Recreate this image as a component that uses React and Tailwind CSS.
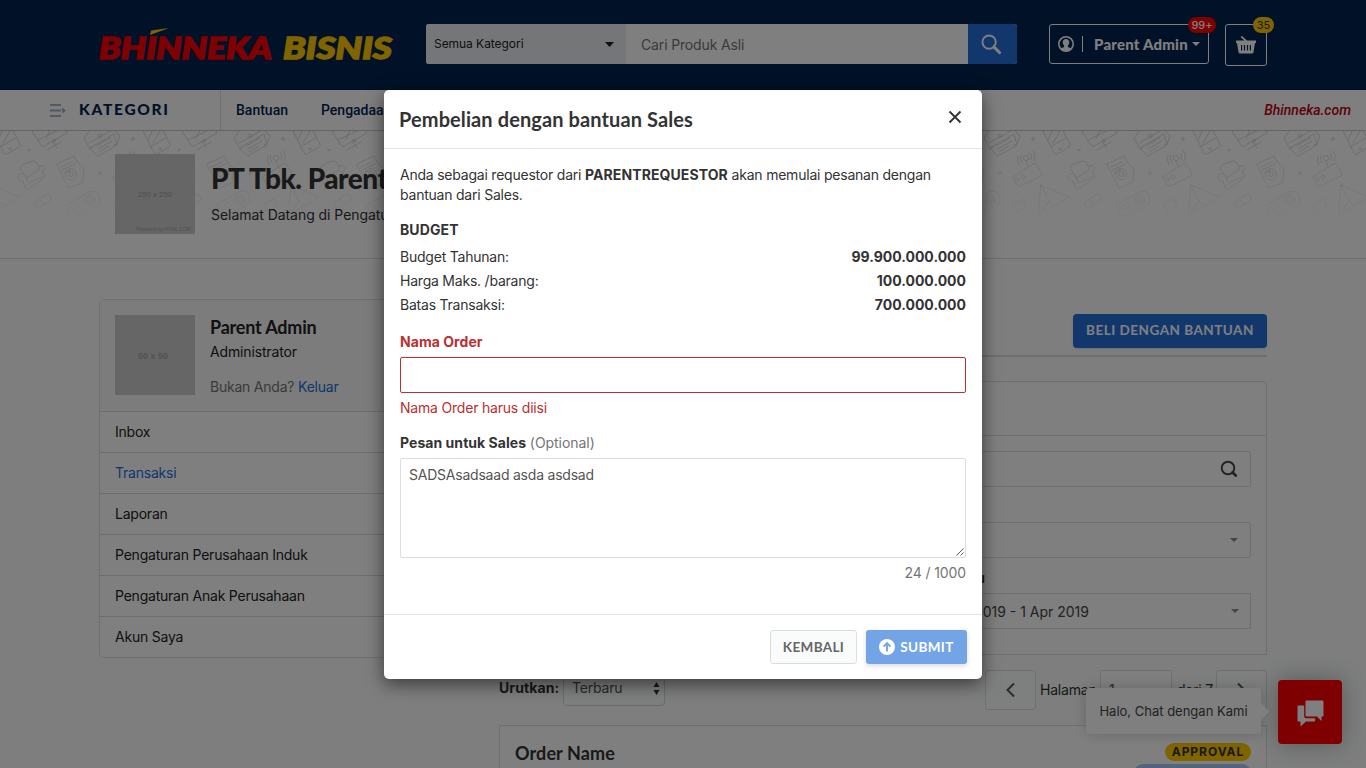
import React from "react";

const menu = ["Inbox", "Transaksi", "Laporan", "Pengaturan Perusahaan Induk", "Pengaturan Anak Perusahaan", "Akun Saya"];
const budget = [
  ["Budget Tahunan:", "99.900.000.000"],
  ["Harga Maks. /barang:", "100.000.000"],
  ["Batas Transaksi:", "700.000.000"],
];

function Caret({ className }) {
  return (
    <svg className={className} viewBox="0 0 10 5" preserveAspectRatio="none" fill="currentColor">
      <path d="M0 0h10L5 5z" />
    </svg>
  );
}

function Logo() {
  return (
    <svg width="298" height="40" viewBox="0 0 298 40" className="block">
      <g fontFamily="Lato, sans-serif" fontWeight="900" fontStyle="italic" fontSize="29.5" strokeWidth="1.5">
        <text x="0" y="34" fill="#fe0000" stroke="#fe0000" textLength="173" lengthAdjust="spacingAndGlyphs">BHINNEKA</text>
        <text x="184" y="34" fill="#ffc800" stroke="#ffc800" textLength="109" lengthAdjust="spacingAndGlyphs">BISNIS</text>
      </g>
      <path d="M52 5.500 70 3 51 10z" fill="#ffc800" />
    </svg>
  );
}

function Washer() {
  return (
    <g>
      <path d="M124 33l17-8 4 7 6 6-1 9-1 5-13 5z M128 36l11-5 M129 39l13-6 M131 42l7-3" />
      <circle cx="138" cy="43" r="5.5" />
      <circle cx="138" cy="43" r="2.5" />
    </g>
  );
}

function Projector() {
  return (
    <g>
      <path d="M-16 74l22-13q7-3 10 3l1 4q1 4-3 6l-22 11q-4 2-6-2z M-13 77l9-5 M-12 80l9-5" />
      <circle cx="7" cy="69" r="5" />
      <circle cx="7" cy="69" r="2.5" />
    </g>
  );
}

function HeroPattern() {
  return (
    <svg className="absolute inset-0 h-full w-full">
      <defs>
        <linearGradient id="fade" x1="0" y1="0" x2="0" y2="1">
          <stop offset="0" stopColor="#fff" stopOpacity="1" />
          <stop offset="0.45" stopColor="#fff" stopOpacity="0.5" />
          <stop offset="0.7" stopColor="#fff" stopOpacity="0.15" />
        </linearGradient>
        <mask id="fadeMask">
          <rect width="1366" height="127" fill="url(#fade)" />
        </mask>
        <pattern id="tile" x="-67" y="0" width="150" height="127" patternUnits="userSpaceOnUse">
          <g fill="none" stroke="#d2d2d2" strokeWidth="0.9" strokeLinejoin="round" strokeLinecap="round">
            <path d="M7-1 1 7l6 11 3-2 M30-2l7 7-3 8-3 1 M7 17l3-2 21-12 3 11-19 11z M6 12 31-2 M13 15l14-8 M15 18l14-8 M16 21l10-6" />
            <circle cx="17" cy="5" r="2" />
            <path d="M50 6v4 M48 8h4 M17 40v4 M15 42h4" />
            <path d="M59-2 71 22q1 2 3 1l12-7q2-1 1-3L79-2 M67 16l16-9 M65 9 70-2 M70 12 77 0" />
            <circle cx="77" cy="18" r="1" />
            <circle cx="96" cy="19" r="1" />
            <path d="M99 0l9 14q1 2 3 1l23-13-2-4 M105 9l25-12 M113 8l4-9 M120 12l4 5 M114 19l14-8" />
            <circle cx="121" cy="10" r="1.5" />
            <path d="M30 46l20-13q2-1 3 0l6 9q0 2-1 3L37 55q-2 0-3-1z M45 36l-2-6" />
            <circle cx="34.500" cy="48.500" r="1.800" />
            <circle cx="40" cy="45.500" r="1.800" />
            <circle cx="43" cy="27" r="2.700" />
            <path d="M38 24q-2 4 1 8 M35 25q-2 4 1 9 M47 22q3 3 1 7 M50 20q4 4 1 10" />
            <path d="M88 40q-2-5 3-7l9-3q4 0 5 5q5-2 7 2q0 3-3 3l3 6-15 11q-4 2-5-1l-2-6q-4 1-5-3q0-5 5-4q3 1 3 4l13-8q-1-3 2-4 M93 47l3 5 13-6 M92 45l-3-5" />
            <Washer />
            <g transform="translate(-150 0)"><Washer /></g>
            <Projector />
            <g transform="translate(150 0)"><Projector /></g>
            <path d="M31 73l10-5 3 7-9 6-2-1z M58 54l28 12-30 18z M58 54l8 16-9 13 M66 70l-6 9 M66 70l4 4" />
            <path d="M102 71l12-8q3 0 4 4l-1 3-12 7q-3 0-3-6z M107 68l3 5" />
          </g>
        </pattern>
      </defs>
      <rect width="1366" height="127" fill="url(#tile)" mask="url(#fadeMask)" />
    </svg>
  );
}

function Header() {
  return (
    <header className="flex h-[90px] items-start bg-[#02224e] pl-[99px]">
      <div className="mt-[25px] w-[327px]"><Logo /></div>
      <div className="mt-6 flex h-10 w-[591px] overflow-hidden rounded-[3px] bg-white">
        <div className="flex w-[200px] items-center justify-between bg-[#ebedf0] pr-3 pl-2 text-xs tracking-[-0.05px] text-[#222]">
          <span>Semua Kategori</span>
          <Caret className="h-[5px] w-[9px]" />
        </div>
        <div className="flex flex-1 items-center pt-0.5 pl-[15px] text-sm tracking-[-0.15px] text-[#757575]">Cari Produk Asli</div>
        <div className="flex w-[49px] items-center justify-center bg-[#226fd8] text-white">
          <svg className="mr-0.5" width="21" height="21" viewBox="0 0 22 22" fill="none" stroke="currentColor">
            <circle cx="8.500" cy="8.500" r="7" strokeWidth="2" />
            <path d="M13.500 13.500 19.500 19.500" strokeWidth="3" strokeLinecap="round" />
          </svg>
        </div>
      </div>
      <div className="relative mt-6 ml-8 flex h-10 w-40 items-center rounded-[3px] border border-white pl-2 text-white">
        <svg width="16" height="16" viewBox="0 0 16 16">
          <circle cx="8" cy="8" r="7.200" fill="none" stroke="currentColor" strokeWidth="1.600" />
          <path d="M8 3c-2 0-3.300 1.500-3.300 3.300 0 1.400.6 2.400 1.400 3.200v1.400L2.600 12.400a7 7 0 0 0 10.800 0L9.900 10.900V9.500c.8-.8 1.400-1.800 1.400-3.200C11.300 4.500 10 3 8 3z" fill="currentColor" />
        </svg>
        <span className="ml-2 h-4 w-px bg-white" />
        <span className="ml-[11px] w-[98px] font-['Lato',sans-serif] text-[15px] font-black tracking-[0.2px]">Parent Admin</span>
        <Caret className="h-1 w-2" />
        <span className="absolute -top-2 left-[138px] flex h-4 w-7 items-center justify-center rounded-full bg-[#fe0000] text-[11px] font-medium">99+</span>
      </div>
      <div className="relative mt-6 ml-4 flex h-[42px] w-[42px] items-center justify-center rounded-[3px] border border-white text-white">
        <svg width="20" height="18" viewBox="0 0 20 18" fill="currentColor">
          <path fillRule="evenodd" d="M4.500 1 6 0l5 4.500h9V7h-1l-1.500 9q-.2 1.500-1.500 1.500H4Q2.700 17.500 2.500 16L1 7H0V4.500h8.500z M5 9v5.500h1.200V9z M7.900 9v5.500h1.200V9z M10.900 9v5.500h1.200V9z M13.800 9v5.500H15V9z" />
        </svg>
        <span className="absolute -top-2 left-[27px] flex h-4 w-[21px] items-center justify-center rounded-full bg-[#ffc800] text-[11px] text-[#333]">35</span>
      </div>
    </header>
  );
}

function Nav() {
  return (
    <nav className="flex h-[41px] items-center border-b border-[#c8c8c8] bg-white font-['Roboto',sans-serif] text-sm font-medium text-[#02224e]">
      <div className="flex h-full w-[221px] items-center border-r border-[#dddfe2] pl-[50px]">
        <svg width="16" height="13" viewBox="0 0 16 13" fill="none" stroke="#a4b2c4" strokeWidth="2">
          <path d="M0 1h11 M0 6.500h11 M0 12h11" />
          <path d="M12 3.500 16 6.500 12 9.500z" fill="#a4b2c4" stroke="none" />
        </svg>
        <span className="mb-0.5 ml-[13px] font-['Lato',sans-serif] text-[15.5px] font-black tracking-[1.7px]">KATEGORI</span>
      </div>
      <span className="ml-[15px] w-[85px]">Bantuan</span>
      <span>Pengadaan</span>
      <span className="mr-[15px] ml-auto text-[#c00010] italic">Bhinneka.com</span>
    </nav>
  );
}

function Sidebar() {
  return (
    <aside className="mt-10 h-[359px] w-[370px] rounded border border-[#dde1e1] bg-white">
      <div className="flex h-[111px] bg-[#f8f9f9] pt-[15px] pl-[15px]">
        <div className="flex h-20 w-20 items-center justify-center bg-[#ccc] pt-1 pr-1 font-['Liberation_Sans',sans-serif] text-[9px] font-bold text-[#a4a4a4]">50 x 50</div>
        <div className="ml-[15px] flex flex-col text-sm text-[#222]">
          <span className="font-['Lato',sans-serif] text-lg leading-6 font-bold tracking-[-0.2px]">Parent Admin</span>
          <span className="mt-[3px] leading-5 tracking-[-0.15px]">Administrator</span>
          <span className="mt-[15px] leading-5 tracking-[-0.22px] text-[#757575]">Bukan Anda? <a className="text-[#226fd8]">Keluar</a></span>
        </div>
      </div>
      {menu.map((m) => (
        <div key={m} className={"flex h-[41px] items-center border-t border-[#d8dada] pl-[15px] text-sm tracking-[-0.22px] " + (m === "Transaksi" ? "text-[#226fd8]" : "text-[#222]")}>{m}</div>
      ))}
    </aside>
  );
}

function Main() {
  return (
    <main className="w-[768px] text-sm text-[#333]">
      <div className="flex h-[98px] items-end justify-end border-b-2 border-[#dcdede] pb-[7px]">
        <button className="h-[34px] w-[194px] rounded bg-[#226fd8] font-['Lato',sans-serif] text-[13.5px] font-bold tracking-[0.5px] text-white shadow">BELI DENGAN BANTUAN</button>
      </div>
      <section className="mt-6 h-[274px] rounded-t border border-[#dcdede] bg-white">
        <div className="h-[54px] border-b border-[#dcdede]" />
        <div className="flex flex-col px-[15px]">
          <div className="mt-[15px] flex h-9 items-center justify-end rounded-[2px] border border-[#dcdede] pr-3 text-[#444]">
            <svg width="18" height="18" viewBox="0 0 18 18" fill="none" stroke="currentColor">
              <circle cx="8" cy="8" r="6.300" strokeWidth="1.900" />
              <path d="M12.500 12.500 15.800 15.600" strokeWidth="2.700" strokeLinecap="round" />
            </svg>
          </div>
          <div className="mt-[35px] flex h-9 items-center justify-end rounded-[3px] border border-[#dcdede] pr-3 text-[#888]">
            <Caret className="h-1 w-2" />
          </div>
          <div className="mt-2.5 w-[470px] text-right leading-5 font-semibold">Rentang Waktu</div>
          <div className="mt-[5px] flex h-9 items-center justify-end border border-[#dcdede] pr-[11px] text-[#888]">
            <span className="mt-0.5 mr-[142px] text-[#444]">1 Mar 2019 - 1 Apr 2019</span>
            <Caret className="h-1 w-2" />
          </div>
        </div>
      </section>
      <div className="mt-[15px] flex h-10 items-start">
        <span className="w-16 leading-9 font-bold tracking-[0.1px]">Urutkan:</span>
        <div className="flex h-9 w-[102px] items-center justify-between rounded border border-[#d4d8d8] bg-[#fdfefe] pr-1 pl-2 text-[#555]">
          <span className="tracking-[-0.2px]">Terbaru</span>
          <svg width="7" height="13" viewBox="0 0 7 13" fill="#333"><path d="M3.500 0 6.500 5h-6z M3.500 13 6.500 8h-6z" /></svg>
        </div>
        <div className="ml-auto flex h-10 items-center tracking-[-0.2px]">
          <div className="flex h-10 w-[51px] items-center justify-center rounded-[3px] border border-[#dcdede] bg-[#fdfefe]">
            <svg width="9" height="16" viewBox="0 0 9 16" fill="none" stroke="#555" strokeWidth="1.900"><path d="M8 1.500 1.500 8 8 14.500" /></svg>
          </div>
          <span className="ml-1 w-[60px]">Halaman</span>
          <div className="flex h-10 w-[72px] items-center rounded-[2px] border border-[#dcdede] bg-white pl-2 text-[#555]">1</div>
          <span className="ml-[5px] w-[39px]">dari 7</span>
          <div className="flex h-10 w-[51px] items-center justify-center rounded-[3px] border border-[#dcdede] bg-[#fdfefe]">
            <svg width="9" height="16" viewBox="0 0 9 16" fill="none" stroke="#555" strokeWidth="1.900"><path d="M1 1.500 7.500 8 1 14.500" /></svg>
          </div>
        </div>
      </div>
      <section className="mt-[15px] flex h-20 justify-between border border-[#dcdede] bg-white px-[15px]">
        <h2 className="mt-[15px] font-['Lato',sans-serif] text-lg leading-6 font-bold tracking-[0.1px]">Order Name</h2>
        <div className="mt-[17px] flex flex-col items-end">
          <span className="flex h-[18px] w-[86px] items-center justify-center rounded-full bg-[#ffc800] text-xs font-bold tracking-[0.95px]">APPROVAL</span>
          <span className="mt-[3px] flex h-[18px] w-[117px] rounded-full bg-[#a9c9f5]" />
        </div>
      </section>
    </main>
  );
}

function ChatWidget() {
  return (
    <div className="absolute top-[680px] left-[1086px] flex items-start">
      <div className="relative mt-2 flex h-[46px] w-[175px] items-center justify-center rounded-[3px] bg-white pt-px text-[13px] text-[#444] shadow-[0_0_14px_rgba(0,0,0,0.2)]">
        Halo, Chat dengan Kami
        <svg className="absolute top-[15px] left-[175px]" width="8" height="17" viewBox="0 0 8 17"><path d="M0 0 8 8.500 0 17z" fill="#fff" /></svg>
      </div>
      <div className="ml-[17px] flex h-16 w-16 items-center justify-center rounded bg-[#fe0000] shadow-[0_0_24px_rgba(0,0,0,0.3)]">
        <svg className="mt-0.5" width="27" height="27" viewBox="0 0 27 27" fill="#fff">
          <path d="M9.500.500h16q1 0 1 1v14q0 1-1 1h-1v4.500l-4.500-4.500H9.500q-1 0-1-1v-14q0-1 1-1z" />
          <path d="M1.500 5.500h5.700v10.700q0 2 2 2h9v2.300q0 1-1 1H9L3.500 26.500v-5h-2q-1 0-1-1v-14q0-1 1-1z" />
        </svg>
      </div>
    </div>
  );
}

function Modal() {
  return (
    <div role="dialog" className="absolute top-[90px] left-[384px] flex h-[589px] w-[598px] flex-col rounded-[5px] bg-white text-sm leading-5 tracking-[-0.22px] text-[#333] shadow-[0_5px_18px_rgba(0,0,0,0.55)]">
      <div className="flex h-[59px] items-center justify-between border-b border-[#e3e3e3] pr-5 pl-[15px]">
        <h1 className="font-['Lato',sans-serif] text-xl font-bold tracking-[0.1px]">Pembelian dengan bantuan Sales</h1>
        <svg className="mb-1" width="14" height="14" viewBox="0 0 14 14" stroke="#333" strokeWidth="1.900"><path d="M1.500 1.500 12.500 12.500 M12.500 1.500 1.500 12.500" /></svg>
      </div>
      <div className="flex flex-1 flex-col px-4 pt-4">
        <p>Anda sebagai requestor dari <b className="tracking-[0.1px]">PARENTREQUESTOR</b> akan memulai pesanan dengan<br />bantuan dari Sales.</p>
        <h2 className="mt-[15px] mb-[5px] font-bold tracking-[0.1px]">BUDGET</h2>
        {budget.map(([k, v]) => (
          <div key={k} className="flex justify-between leading-6"><span>{k}</span><b className="tracking-normal">{v}</b></div>
        ))}
        <label className="mt-[15px] font-bold tracking-[0.05px] text-[#b93030]">Nama Order</label>
        <div className="mt-[5px] h-9 rounded-[2px] border border-[#b93030]" />
        <span className="mt-[5px] tracking-[-0.2px] text-[#b93030]">Nama Order harus diisi</span>
        <label className="mt-[15px]"><b className="tracking-[0.05px]">Pesan untuk Sales</b> <span className="tracking-[-0.05px] text-[#757575]">(Optional)</span></label>
        <div className="mt-[5px] flex h-[100px] items-start rounded-[2px] border border-[#dcdede] pt-[6px] pl-2 text-[#555]">
          <span>SADSAsadsaad asda asdsad</span>
          <svg className="mr-px mb-px ml-auto self-end" width="8" height="8" viewBox="0 0 8 8" stroke="#444" strokeWidth="0.900"><path d="M.5 7.500 7.500.5 M4.500 7.500 7.500 4.500" /></svg>
        </div>
        <span className="mt-[5px] text-right tracking-[-0.1px] text-[#757575]">24 / 1000</span>
      </div>
      <div className="flex h-[65px] items-start justify-end border-t border-[#e3e3e3] pt-[15px] pr-[15px] font-['Lato',sans-serif] text-[13.5px] font-bold tracking-[0.35px]">
        <button className="h-[34px] w-[87px] rounded-[3px] border border-[#dcdede] bg-[#fafbfb] text-[#666]">KEMBALI</button>
        <button className="ml-[9px] flex h-[34px] w-[101px] items-center justify-center rounded-[3px] bg-[#73a4e5] text-white shadow-[0_2px_5px_rgba(0,0,0,0.15)]">
          <svg className="mr-[5px]" width="16" height="16" viewBox="0 0 16 16"><circle cx="8" cy="8" r="8" fill="#fff" /><path d="M8 12.500V4.500 M4.500 7.700 8 4.200 11.500 7.700" fill="none" stroke="#73a4e5" strokeWidth="1.900" /></svg>
          SUBMIT
        </button>
      </div>
    </div>
  );
}

export default function App() {
  return (
    <div className="relative h-[768px] w-[1366px] overflow-hidden bg-[#fafcfb] font-['Inter',sans-serif]">
      <Header />
      <Nav />
      <section className="relative h-32 border-b border-[#dadcdc] bg-white">
        <HeroPattern />
        <div className="relative flex pt-[23px] pl-[115px]">
          <div className="flex h-20 w-20 flex-col items-center bg-[#ccc] font-['Liberation_Sans',sans-serif] text-[#a0a0a0]">
            <span className="mt-[34px] text-[8px] leading-[14px] tracking-[-0.1px]">250 x 250</span>
            <span className="mt-auto mr-1 self-end text-[5px] leading-[9px]">Powered by HTML.COM</span>
          </div>
          <div className="ml-4 flex flex-col whitespace-nowrap text-[#333]">
            <h1 className="mt-1 font-['Lato',sans-serif] text-[28px] leading-10 font-black tracking-[-0.5px]">PT Tbk. Parent</h1>
            <p className="mt-[7px] text-sm leading-5 tracking-[-0.05px]">Selamat Datang di Pengaturan Akun</p>
          </div>
        </div>
      </section>
      <div className="flex gap-[30px] pl-[99px]">
        <Sidebar />
        <Main />
      </div>
      <ChatWidget />
      <div className="absolute inset-0 bg-black/50" />
      <Modal />
    </div>
  );
}
